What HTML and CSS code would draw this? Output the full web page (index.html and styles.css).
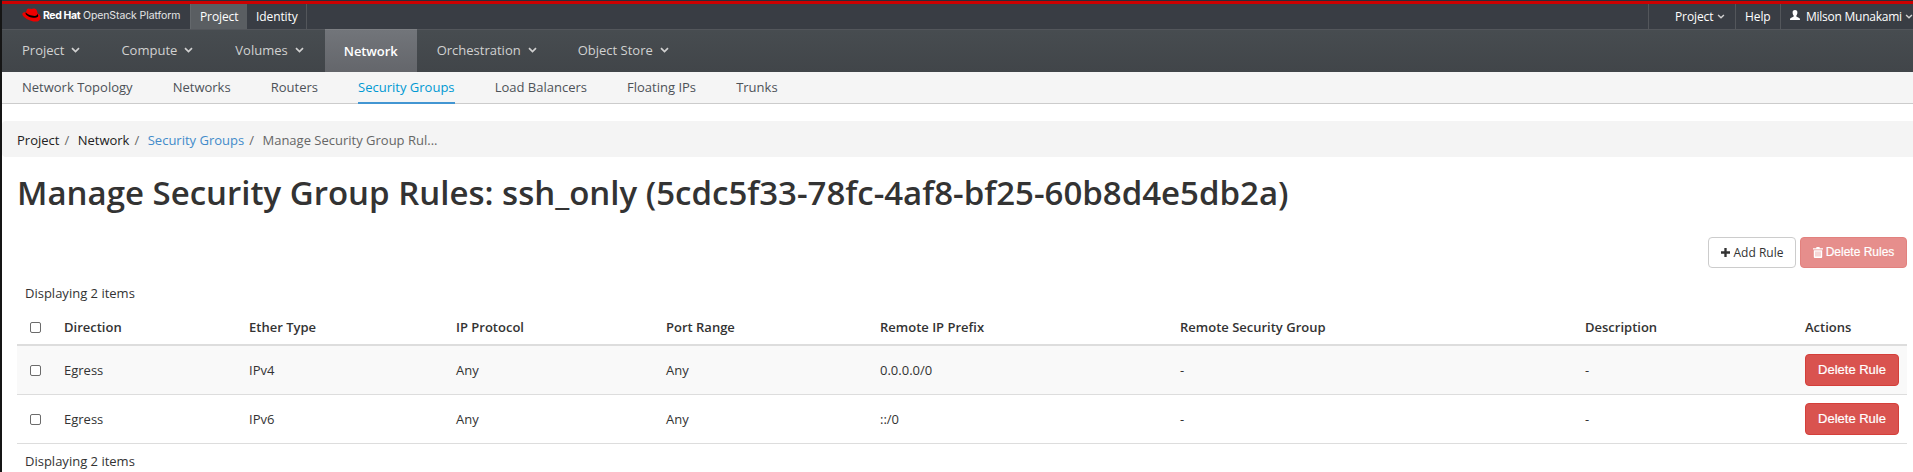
FILE: index.html
```html
<!DOCTYPE html>
<html lang="en">
<head>
<meta charset="utf-8">
<title>Manage Security Group Rules</title>
<link rel="stylesheet" href="styles.css">
</head>
<body>
<svg class="defs" width="0" height="0"><defs>
<symbol id="chev" viewBox="0 0 9 6"><path d="M1 1.100 4.500 4.500 8 1.100" fill="none" stroke="currentColor" stroke-width="1.700"/></symbol>
</defs></svg>
<header class="topbar">
  <div class="brand">
    <svg class="hat" viewBox="0 0 19 14"><path d="M5 1.200C6 0 7.300.8 8.500.8 10 1.200 10.800.1 12.400.6 14.500 1.100 15 2.500 15.700 5.600 17.600 6.400 18.900 8 18.500 10 18 12.500 16 13.700 13.500 13.600 8 13.300.300 9.200.300 5.900.300 4.600 2 4.200 3.900 4.200Z" fill="#e00"/><path d="M3.900 4.200 3.500 5.700C4.500 8 9.500 10 13 9.800 15 9.700 16.400 9 16.200 7.600L15.700 5.600C15.500 7.300 14.500 7.900 12.500 7.900 9 7.900 4.500 6 3.900 4.200Z" fill="#000"/></svg>
    <span class="brand-name"><b>Red Hat</b> OpenStack Platform</span>
  </div>
  <a class="top-tab on">Project</a>
  <a class="top-tab identity">Identity</a>
  <div class="tools">
    <a class="tool project">Project<svg class="chev sm"><use href="#chev"/></svg></a>
    <a class="tool help">Help</a>
    <a class="tool user"><svg class="person" viewBox="0 0 10 10"><path d="M5 0C6.700 0 7.500 1 7.400 2.700 7.300 4.200 6.800 5 6.300 5.600V6.600L9.200 7.900C9.800 8.200 10 8.700 10 10H0C0 8.700.200 8.200.800 7.900L3.700 6.600V5.600C3.200 5 2.700 4.200 2.600 2.700 2.500 1 3.300 0 5 0Z" fill="currentColor"/></svg>Milson Munakami<svg class="chev sm"><use href="#chev"/></svg></a>
  </div>
</header>
<nav class="mainnav">
  <a>Project<svg class="chev"><use href="#chev"/></svg></a>
  <a class="compute">Compute<svg class="chev"><use href="#chev"/></svg></a>
  <a>Volumes<svg class="chev"><use href="#chev"/></svg></a>
  <a class="current">Network</a>
  <a>Orchestration<svg class="chev"><use href="#chev"/></svg></a>
  <a>Object Store<svg class="chev"><use href="#chev"/></svg></a>
</nav>
<nav class="subnav">
  <a>Network Topology</a><a>Networks</a><a>Routers</a><a class="current">Security Groups</a><a>Load Balancers</a><a>Floating IPs</a><a>Trunks</a>
</nav>
<ol class="crumbs">
  <li>Project</li><li>Network</li><li class="link">Security Groups</li><li class="last">Manage Security Group Rul...</li>
</ol>
<main>
  <h1>Manage Security Group Rules: ssh_only (5cdc5f33-78fc-4af8-bf25-60b8d4e5db2a)</h1>
  <div class="actions">
    <button class="btn add"><svg class="plus" viewBox="0 0 10 10"><path d="M3.700 0h2.600v3.700H10v2.600H6.300V10H3.700V6.300H0V3.700h3.700z" fill="currentColor"/></svg>Add Rule</button>
    <button class="btn danger faded"><svg class="trash" viewBox="0 0 10 11"><path d="M3.200 1.200V.8Q3.200 0 4 0h2q.8 0 .8.800v.4H10v1.300H0V1.200zM.8 3.200h8.400V10q0 1-1 1H1.800q-1 0-1-1z" fill="currentColor"/><path d="M3 4.500v5M5 4.500v5M7 4.500v5" stroke="#d9534f" stroke-width=".7"/></svg>Delete Rules</button>
  </div>
  <div class="count">Displaying 2 items</div>
  <table>
    <colgroup><col class="c0"><col class="c1"><col class="c2"><col class="c3"><col class="c4"><col class="c5"><col class="c6"><col class="c7"><col class="c8"></colgroup>
    <thead><tr><th><span class="box"></span></th><th>Direction</th><th>Ether Type</th><th>IP Protocol</th><th>Port Range</th><th>Remote IP Prefix</th><th>Remote Security Group</th><th>Description</th><th>Actions</th></tr></thead>
    <tbody>
      <tr class="odd"><td><span class="box"></span></td><td>Egress</td><td>IPv4</td><td>Any</td><td>Any</td><td>0.0.0.0/0</td><td>-</td><td>-</td><td><button class="btn danger">Delete Rule</button></td></tr>
      <tr><td><span class="box"></span></td><td>Egress</td><td>IPv6</td><td>Any</td><td>Any</td><td>::/0</td><td>-</td><td>-</td><td><button class="btn danger">Delete Rule</button></td></tr>
    </tbody>
  </table>
  <div class="count bottom">Displaying 2 items</div>
</main>
</body>
</html>
```
FILE: styles.css
```css
* { box-sizing: border-box; }
html { background: #fff; }
body { margin: 0; height: 472px; overflow: hidden; border-left: 2px solid #151515; font: 13px/20px "Open Sans", sans-serif; color: #333; white-space: nowrap; }
svg { flex-shrink: 0; }
.defs { position: absolute; }
.topbar { height: 29px; border-top: 1px solid #292e34; background: linear-gradient(#c00 3px, #393d44 3px); display: flex; padding-top: 3px; color: #fff; font-size: 12px; line-height: 26px; }
.brand { width: 188px; display: flex; align-items: flex-start; padding: 4px 0 0 20px; }
.hat { width: 19px; height: 14px; margin-right: 2px; }
.brand-name { font: 10.5px/15px Inter, sans-serif; color: #e4e5e6; letter-spacing: -.1px; }
.brand-name b { color: #fff; font-weight: 700; letter-spacing: -.4px; }
.top-tab { width: 58px; border-right: 1px solid #53565b; padding-left: 9px; letter-spacing: -.1px; }
.top-tab.on { width: 57px; padding-left: 9px; background: #5a5e62; border-left: 1px solid #64686c; border-right: 0; }
.top-tab.identity { width: 60px; }
.tools { margin-left: auto; display: flex; }
.tool { border-left: 1px solid #53565b; display: flex; align-items: center; letter-spacing: -.1px; }
.tool.project { width: 87px; padding-left: 26px; }
.tool.help { width: 45px; padding-left: 9px; }
.tool.user { width: 133px; padding-left: 9px; letter-spacing: -.25px; }
.person { width: 10px; height: 10px; margin: -3px 6px 0 0; }
.chev { width: 9px; height: 6px; margin-left: 7px; color: #d1d1d1; }
.chev.sm { width: 8px; height: 5px; margin-left: 4px; margin-top: -1px; }
.tool.user .chev { margin-left: 3px; }
.mainnav { height: 43px; border-top: 1px solid #53565b; background: linear-gradient(#474c50, #414549); display: flex; color: #d1d1d1; }
.mainnav a { display: flex; align-items: center; padding: 0 21px 2px 20px; }
.mainnav .compute { padding-right: 22px; }
.mainnav .current { width: 92px; margin-top: -1px; padding: 0 0 1px; justify-content: center; background: linear-gradient(#72757a, #64666b); border-top: 1px solid #7d7f83; color: #fff; font-weight: 600; letter-spacing: -.1px; }
.subnav { height: 32px; background: #f5f5f5; border-bottom: 1px solid #ccc; display: flex; gap: 40.1px; padding-left: 20px; color: #4d5258; line-height: 31px; }
.subnav .current { height: 32px; color: #0099d3; border-bottom: 2px solid #4296d2; }
.crumbs { list-style: none; margin: 17px 0 0; padding: 0 0 0 15px; height: 36px; background: #f4f4f4; border-radius: 4px 0 0 4px; display: flex; line-height: 39px; color: #222; }
.crumbs li:not(:last-child)::after { content: "/"; color: #666; padding: 0 8.5px 0 5px; }
.crumbs .link { color: #428bca; }
.crumbs .last { color: #666; }
main { padding: 0 6px 0 15px; }
h1 { margin: 15px 0 0; font-size: 33px; line-height: 42px; font-weight: 600; }
.actions { display: flex; justify-content: flex-end; gap: 4px; margin-top: 23px; }
.btn { height: 32px; border: 1px solid #ccc; border-radius: 4px; background: #fff; color: #333; font: 12px/20px "Open Sans", sans-serif; padding: 0; display: flex; align-items: center; justify-content: center; }
.btn.add { width: 88px; height: 31px; }
.btn.danger { width: 94px; background: #d9534f; border-color: #d43f3a; color: #fff; font: 13px/20px "Liberation Sans", sans-serif; padding-bottom: 1px; -webkit-text-stroke: .2px #fff; }
.btn.faded { width: 107px; height: 31px; opacity: .65; font: 12px/20px "Liberation Sans", sans-serif; }
.plus { width: 9px; height: 9px; margin-right: 4px; }
.trash { width: 10px; height: 11px; margin-right: 3px; }
.count { margin: 15px 0 0 8px; }
.count.bottom { margin-top: 7px; }
table { width: 1890px; table-layout: fixed; border-collapse: separate; border-spacing: 0; margin-top: 6px; }
th, td { text-align: left; padding: 0 8px; }
th { height: 37px; font-weight: 600; border-bottom: 2px solid #ddd; }
td { height: 49px; border-bottom: 1px solid #ddd; }
.odd td { background: #f9f9f9; }
.box { display: block; width: 11px; height: 11px; margin: 1px 0 0 5px; border: 1px solid #6b6b6b; border-radius: 2px; background: #fff; }
.c0 { width: 39px; } .c1 { width: 185px; } .c2 { width: 207px; } .c3 { width: 210px; } .c4 { width: 214px; }
.c5 { width: 300px; } .c6 { width: 405px; } .c7 { width: 220px; } .c8 { width: 110px; }
```
